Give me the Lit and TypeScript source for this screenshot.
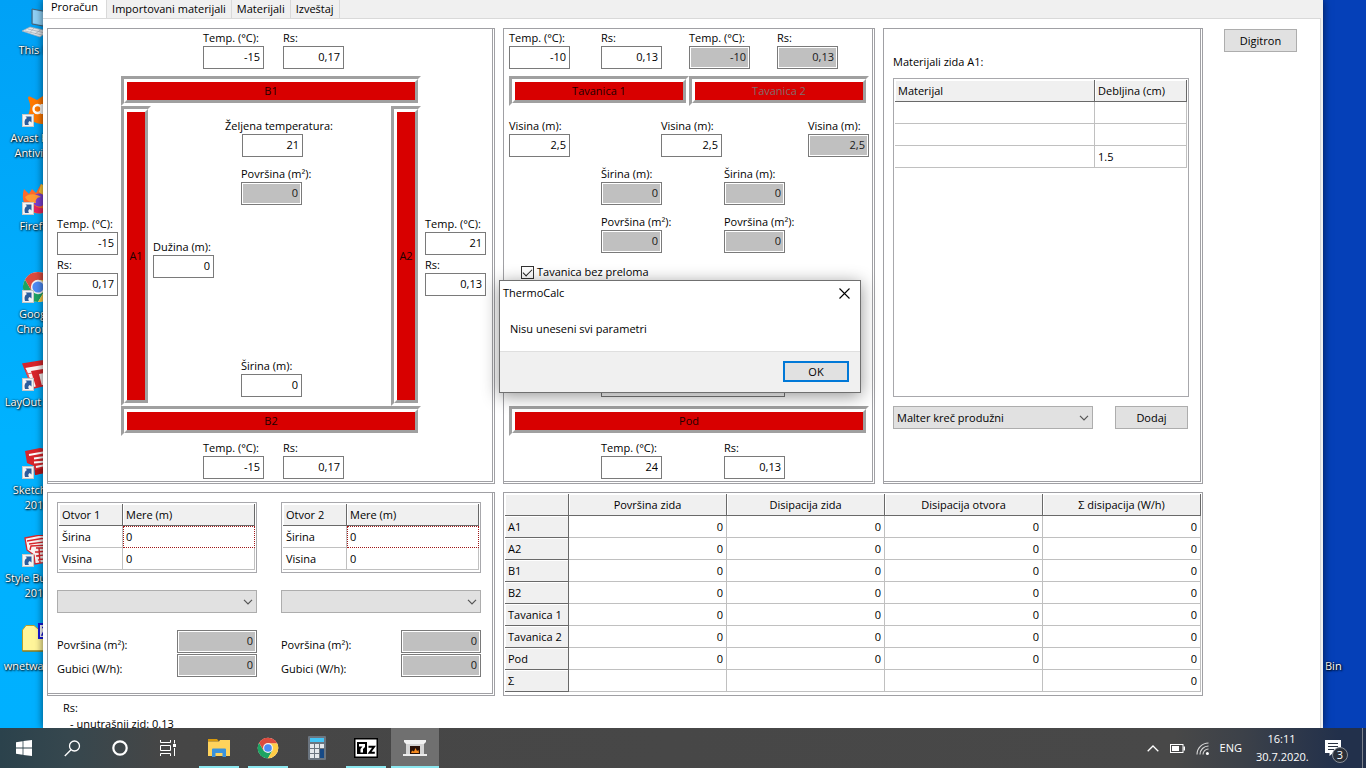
import { LitElement, html, css, svg, nothing } from "lit";
import { customElement, state } from "lit/decorators.js";
import { classMap } from "lit/directives/class-map.js";

const shortcutArrow = svg`
  <rect x="0.5" y="19.5" width="11" height="12" fill="#f4f4f4" stroke="#c8c8c8"/>
  <path d="M3 30 C2 26 3 24 5 23 L3.5 21.5 H9.5 V27.5 L7.8 26 C6 27 6 28.5 7 30 Z" fill="#2c5c9c"/>`;

const chromeShape = svg`
  <circle cx="16" cy="16" r="15" fill="#fff"/>
  <path d="M3 8.5 A15 15 0 0 0 16 31 L22.5 19.8 L9.5 19.8 Z" fill="#1da462"/>
  <path d="M16 31 A15 15 0 0 0 29.2 9 L16 9 L22.5 19.8 Z" fill="#ffcd46"/>
  <path d="M16 9 L29.2 9 A15 15 0 0 0 3 8.5 L9.5 19.8 Z" fill="#dd4b3e"/>
  <circle cx="16" cy="16" r="7.2" fill="#f4f4f4"/>
  <circle cx="16" cy="16" r="5.6" fill="#4c8bf5"/>`;

const layoutTile = svg`
  <path d="M1 5 L32 0 L32 24 L11 29 Z" fill="#fbf4f4" stroke="#d8252b" stroke-width="1.5"/>
  <path d="M1 5 L32 0 L32 4 L3 9 Z" fill="#d8252b"/>
  <path d="M9 12 L32 8 V12 L17 15 L20 27 L14 28 Z" fill="#d8252b"/>
  <path d="M4 11 L10 28 M5 15 L10 14 M7 20 L12 19" fill="none" stroke="#e0575b" stroke-width="1.2"/>`;

const sketchTile = svg`
  <path d="M3 4 L18 1 L32 3 L31 24 L13 28 L12 19 L5 16 Z" fill="#d8252b"/>
  <path d="M7 8 L21 5.5 L32 7 M12 11.5 L22 10 L32 11.5 M14 20 L24 18 L24 14.5 L12 15.5" fill="none" stroke="#fff" stroke-width="2"/>
  <path d="M13 28 L31 24 L31 19 L13 23 Z" fill="#b3151b"/>`;

const builderTile = svg`
  <path d="M3 3 L18 0 L32 2 L31 26 L13 29 L12 20 L5 15 Z" fill="#fbf4f4" stroke="#d8252b" stroke-width="1.3"/>
  <path d="M5 6 L20 3.5 L32 5 M7 9 L22 7 L32 8.5 M8 15 L9 11 L27 10 M14 13 L30 13 M13 17 L27 16 L27 20 M14 21 L30 19 M16 25 L30 22 M17 13 L18 28 M23 4 L23 9"
    fill="none" stroke="#d8252b" stroke-width="1.4"/>`;

const desktopIcons = [
  { label: "This PC", art: svg`
      <path d="M10 2 L32 6 L32 21 L10 17 Z" fill="#5db2e8" stroke="#50606c"/>
      <path d="M11 3 L31 7 L20 18 L11 16 Z" fill="#8fd0f5"/>
      <path d="M0 24 L8 20 L26 24 L18 30 Z" fill="#e2e6ea" stroke="#a3abb3" stroke-width="0.7"/>
      <path d="M3 24 L20 28 M6 22 L23 26 M8 25.5 L12 21 M13 27 L19 22.5" stroke="#a3abb3" stroke-width="0.7"/>` },
  { label: "Avast Free Antivirus", art: svg`
      <path d="M6 3 C6 1.5 7 1 8.5 1.8 L15 5 L21 1 C26 0 31 6 31 14 C32 24 27 30 20 29 C14 29 6 24 4 22 C7 20 7 17 8 14 C9 10 7 6 6 3 Z" fill="#ff7800"/>
      <circle cx="15.5" cy="14" r="4" fill="none" stroke="#fff" stroke-width="2.4"/>
      <path d="M19.8 9 V19" stroke="#fff" stroke-width="2.4"/>${shortcutArrow}` },
  { label: "Firefox", art: svg`
      <path d="M2 6 L7 11 L10 6 L14 10 L19 1 C28 6 32 13 30 21 C27 31 14 34 6 26 C0 20 0 12 2 6 Z" fill="#ff6a2b"/>
      <path d="M19 1 C28 6 32 13 30 20 C27 14 21 13 17 9 Z" fill="#ffcb37"/>
      <path d="M8 26 C14 33 27 31 30 21 C25 26 18 27 12 22 Z" fill="#e6245e"/>
      <circle cx="17" cy="17" r="6.5" fill="#7a3fd0"/>
      <path d="M3 14 C8 10 14 11 19 14 C15 14 13 17 14 20 C9 20 5 18 3 14 Z" fill="#ff9a33"/>${shortcutArrow}` },
  { label: "Google Chrome", art: svg`${chromeShape}${shortcutArrow}` },
  { label: "LayOut 2016", art: svg`${layoutTile}${shortcutArrow}` },
  { label: "SketchUp 2016", art: svg`${sketchTile}${shortcutArrow}` },
  { label: "Style Builder 2016", art: svg`${builderTile}${shortcutArrow}` },
  { label: "wnetwatcher", art: svg`
      <path d="M0.5 7 L4 2.5 L12 2.5 L16 6 L31 6 L31 28 L0.5 28 Z" fill="#fff59a" stroke="#b79f2c"/>
      <path d="M0.5 28 L31 28" stroke="#7c6a10"/>
      <rect x="17" y="1" width="14" height="14" fill="#fff" stroke="#1818e0" stroke-width="2"/>
      <path d="M20 4.5 H28 M24 4.5 L20 12 H28" stroke="#1818e0" stroke-width="1.5" fill="none"/>` },
];

const rows = ["A1", "A2", "B1", "B2", "Tavanica 1", "Tavanica 2", "Pod"];
const metrics = ["Površina zida", "Disipacija zida", "Disipacija otvora", "Σ disipacija (W/h)"];
const tabs = ["Proračun", "Importovani materijali", "Materijali", "Izveštaj"];

@customElement("app-root")
export class AppRoot extends LitElement {
  @state() private tab = 0;
  @state() private dialogOpen = true;

  static styles = css`
    :host {
      display: block;
      height: 100vh;
      font: 11px/16px "Open Sans", "Noto Sans", sans-serif;
      color: #000;
    }
    *, *::before { box-sizing: border-box; }
    button, input, select { font: inherit; color: inherit; margin: 0; border-radius: 0; }
    svg { display: block; }

    .screen {
      position: relative;
      height: 100%;
      display: grid;
      grid-template-rows: minmax(0, 1fr) 40px;
      background: linear-gradient(90deg, #00aafb 0 4%, #0540b8 96%);
      overflow: hidden;
    }
    .desktop { display: flex; min-height: 0; }
    .shortcuts, .edge { width: 43px; overflow: hidden; color: #fff; text-shadow: 1px 1px 2px #000, 0 0 2px #000; }
    .shortcuts { padding-top: 7px; background: linear-gradient(#00a1f6, #00b2ff 60%, #00b0ff); }
    .shortcut {
      width: 74px;
      height: 88px;
      display: flex;
      flex-direction: column;
      align-items: center;
      gap: 3px;
      line-height: 15px;
      text-align: center;
    }
    .shortcut svg { margin-left: 2px; }
    .edge { display: flex; flex-direction: column; justify-content: flex-end; padding: 0 2px 54px; }

    .window {
      flex: 1;
      min-width: 0;
      overflow: hidden;
      display: flex;
      flex-direction: column;
      background: #f0f0f0;
      padding-right: 2px;
    }
    .window-frame { display: flex; flex: 1; min-width: 0; position: relative; box-shadow: 0 0 8px rgba(0, 0, 0, 0.6); }
    .tabs { display: flex; height: 18px; flex: none; }
    .tabs button {
      height: 19px;
      padding: 0 5px 1px;
      border: 0;
      border-right: 1px solid #d9d9d9;
      border-bottom: 1px solid #d9d9d9;
      background: #f0f0f0;
      line-height: 18px;
      white-space: nowrap;
    }
    .tabs button.active { background: #fff; border-bottom-color: #fff; padding: 0 8px 4px; line-height: 14px; }
    .page {
      flex: 1;
      min-height: 0;
      background: #fff;
      border-top: 1px solid #d9d9d9;
      border-right: 1px solid #d9d9d9;
      padding: 9px 23px 0 4px;
      overflow: hidden;
    }
    .layout { display: flex; gap: 21px; align-items: flex-start; }
    .panels {
      flex: 1;
      min-width: 0;
      display: grid;
      grid-template-columns: 448fr 372fr 320fr;
      gap: 8px;
    }
    .panel {
      border: 1px solid #a0a0a4;
      box-shadow: inset -1px -1px 0 #fff, inset -2px -2px 0 #a0a0a4;
      min-width: 0;
    }
    .notes { padding: 4px 16px 0; }
    .notes div { padding-left: 7px; }

    .btn { height: 23px; border: 1px solid #adadad; background: #e1e1e1; padding: 0; text-align: center; }
    .btn.std { width: 73px; flex: none; }
    .digitron { margin-top: 1px; }

    .field { display: flex; flex-direction: column; width: 61px; }
    .field label { white-space: nowrap; height: 16px; }
    .num {
      width: 100%;
      height: 23px;
      border: 1px solid #7a7a7a;
      background: #fff;
      padding: 0 3px 2px;
      text-align: right;
      outline: none;
    }
    .num:disabled { background: #c0c0c0; box-shadow: inset 0 0 0 1px #fff; color: #1a1a1a; opacity: 1; }

    .wall {
      display: flex;
      border: 3px solid;
      border-color: #a0a0a0 #fff #fff #a0a0a0;
      background: #d80000;
      padding: 0;
      height: 30px;
      color: #1c0000;
    }
    .wall span {
      flex: 1;
      align-self: stretch;
      display: flex;
      align-items: center;
      justify-content: center;
      border: 3px solid;
      border-color: #fff #a0a0a0 #a0a0a0 #fff;
      white-space: nowrap;
    }
    .wall.tall { width: 30px; height: 300px; }
    .wall:disabled { color: #836c6c; }

    .plan { display: flex; flex-direction: column; align-items: center; padding: 1px 0 4px; }
    .pair { width: 300px; display: flex; gap: 19px; padding-left: 82px; }
    .pair.top { margin-bottom: 7px; }
    .pair.bottom { margin-top: 4px; }
    .plan > .wall { width: 300px; }
    .middle { display: grid; grid-template-columns: 73px 30px 240px 30px 73px; justify-content: center; }
    .side { display: flex; flex-direction: column; justify-content: center; gap: 2px; padding-left: 9px; }
    .side.right { padding-left: 4px; }
    .room { display: flex; flex-direction: column; padding: 12px 0 9px 74px; }
    .room .area { margin: 9px 0 0 16px; }
    .room .wish .num { margin-left: 17px; }
    .room .len { margin: 34px 0 0 -72px; }
    .room .wid { margin: auto 0 0 16px; }

    .section { width: 360px; margin: 0 auto; padding: 1px 0 4px; display: flex; flex-direction: column; }
    .four { display: grid; grid-template-columns: 92px 88px 88px 61px; margin-bottom: 7px; }
    .roofs { display: grid; grid-template-columns: 1fr 1fr; }
    .three { display: grid; grid-template-columns: 152px 147px 61px; margin: 12px 0 9px; }
    .two { display: grid; grid-template-columns: 123px 61px; padding-left: 92px; row-gap: 9px; }
    .check { display: flex; align-items: center; gap: 3px; padding: 11px 0 0 12px; }
    .check input {
      appearance: none;
      width: 13px;
      height: 13px;
      border: 1px solid #333;
      background: #fff;
      display: grid;
      place-items: center;
    }
    .check input:checked::before {
      content: "";
      width: 9px;
      height: 5px;
      border-left: 1px solid #222;
      border-bottom: 1px solid #222;
      transform: translateY(-1px) rotate(-45deg);
    }
    .span { width: 184px; margin: 78px 0 9px 92px; }
    .section .two.bottom { margin-top: 4px; }

    .materials { padding: 25px 13px 0 9px; display: flex; flex-direction: column; }
    .grid-box { border: 1px solid #a8a8ac; padding: 1px; background: #fff; }
    .materials .grid-box { height: 319px; margin: 8px 0 9px; }
    .add { display: flex; justify-content: space-between; padding-right: 1px; }
    .combo { display: grid; align-items: center; }
    .combo.material { width: 200px; }
    .combo select, .combo svg { grid-area: 1 / 1; }
    .combo svg { justify-self: end; margin-right: 4px; pointer-events: none; }
    .combo select {
      appearance: none;
      width: 100%;
      height: 23px;
      border: 1px solid #adadad;
      background: #e1e1e1;
      padding: 0 20px 0 3px;
      outline: none;
    }

    table { border-collapse: separate; border-spacing: 0; table-layout: fixed; width: 100%; }
    th, td {
      height: 22px;
      padding: 0 3px;
      border-right: 1px solid #c0c0c0;
      border-bottom: 1px solid #c0c0c0;
      font-weight: normal;
      text-align: left;
      line-height: 16px;
      white-space: nowrap;
    }
    th {
      background: #f0f0f0;
      border-color: #696969;
      box-shadow: inset 1px 1px 0 #fff;
    }
    .col-thick { width: 92px; }
    .col-name { width: 64px; }
    .openings tbody th { background: #fff; border-color: #c0c0c0; }
    td.current { outline: 1px dotted #a01818; outline-offset: -1px; border-color: #fff; }
    .results { grid-column: 2 / 4; border: 1px solid #a0a0a4; padding: 1px 1px 3px; }
    .results thead th { text-align: center; }
    .results td { text-align: right; }

    .openings { display: grid; grid-template-columns: 200px 200px; justify-content: space-between; padding: 9px 13px 0 9px; }
    .opening { display: flex; flex-direction: column; }
    .opening .grid-box { padding: 1px 1px 2px; }
    .opening .combo { margin: 17px 0; }
    .loss { display: flex; justify-content: space-between; align-items: flex-end; margin-bottom: 1px; }
    .loss .num { width: 80px; }

    .dialog {
      position: absolute;
      left: 499px;
      top: 280px;
      width: 362px;
      border: 1px solid #707070;
      background: #fff;
      box-shadow: 0 3px 16px rgba(0, 0, 0, 0.42);
    }
    .dialog header { display: flex; justify-content: space-between; height: 28px; padding: 4px 10px 0 3px; }
    .close { border: 0; background: none; padding: 0; width: 11px; height: 16px; display: grid; place-items: center; }
    .dialog p { margin: 0; padding: 12px 10px 14px; }
    .dialog footer {
      display: flex;
      justify-content: flex-end;
      padding: 9px 11px 10px;
      background: #f0f0f0;
      border-top: 1px solid #dfdfdf;
    }
    .ok { width: 66px; height: 21px; border: 2px solid #0078d7; background: #e1e1e1; padding: 0; line-height: 16px; }

    .taskbar {
      position: relative;
      display: flex;
      justify-content: space-between;
      background: linear-gradient(90deg, #2b424c 0, #36474e 5%, #464646 12%, #484848 86%, #3c4149 91%, #22304b 98%);
      color: #fff;
    }
    .apps, .tray { display: flex; }
    .apps button {
      width: 48px;
      border: 0;
      background: none;
      padding: 0;
      display: grid;
      place-items: center;
    }
    .apps button.app { width: 40px; margin: 0 5px 0 4px; }
    .apps button.open { box-shadow: inset 0 -2px 0 #8ce8f0; }
    .apps button.front { width: 48px; margin: 0; background: #707070; }
    .apps button.first { margin-left: 7px; }
    .tray { align-items: center; }
    .tray > svg { margin-right: 11px; }
    .clock { width: 51px; margin: 0 18px 0 14px; text-align: center; line-height: 18px; white-space: nowrap; }
    .alerts { display: grid; width: 24px; height: 100%; margin-right: 13px; border: 0; padding: 0; background: none; position: relative; color: #fff; }
    .alerts svg { margin: 12px 0 0; }
    .badge {
      position: absolute;
      left: 7px;
      top: 19px;
      width: 16px;
      height: 16px;
      border-radius: 50%;
      border: 1px solid #8a8f98;
      background: #2a2f38;
      line-height: 14px;
      text-align: center;
    }
    .peek { height: 100%; border-left: 1px solid #7d828c; width: 4px; }
  `;

  private field(id: string, label: string, value: string, opts: { off?: boolean; cls?: string } = {}) {
    return html`<div class="field ${opts.cls ?? ""}">
      <label for=${id}>${label}</label>
      <input class="num" id=${id} type="text" .value=${value} ?disabled=${opts.off ?? false}>
    </div>`;
  }

  private wall(name: string, tall = false, off = false) {
    return html`<button class=${classMap({ wall: true, tall })} ?disabled=${off}><span>${name}</span></button>`;
  }

  private combo(name: string, value: string, cls = "") {
    return html`<div class="combo ${cls}">
      <select aria-label=${name}><option>${value}</option></select>
      <svg width="10" height="6" viewBox="0 0 10 6"><path d="M1 0.8 L5 4.8 L9 0.8" fill="none" stroke="#555" stroke-width="1.2"/></svg>
    </div>`;
  }

  private opening(n: number) {
    return html`<div class="opening">
      <div class="grid-box">
        <table>
          <colgroup><col class="col-name"><col></colgroup>
          <thead><tr><th>Otvor ${n}</th><th>Mere (m)</th></tr></thead>
          <tbody>
            <tr><th>Širina</th><td class="current">0</td></tr>
            <tr><th>Visina</th><td>0</td></tr>
          </tbody>
        </table>
      </div>
      ${this.combo(`Otvor ${n}`, "")}
      <div class="loss"><label for="oa${n}">Površina (m²):</label><input class="num" id="oa${n}" .value=${"0"} disabled></div>
      <div class="loss"><label for="ol${n}">Gubici (W/h):</label><input class="num" id="ol${n}" .value=${"0"} disabled></div>
    </div>`;
  }

  private plan() {
    return html`<section class="panel plan">
      <div class="pair top">${this.field("b1t", "Temp. (°C):", "-15")}${this.field("b1r", "Rs:", "0,17")}</div>
      ${this.wall("B1")}
      <div class="middle">
        <div class="side">${this.field("a1t", "Temp. (°C):", "-15")}${this.field("a1r", "Rs:", "0,17")}</div>
        ${this.wall("A1", true)}
        <div class="room">
          ${this.field("wish", "Željena temperatura:", "21", { cls: "wish" })}
          ${this.field("area", "Površina (m²):", "0", { off: true, cls: "area" })}
          ${this.field("len", "Dužina (m):", "0", { cls: "len" })}
          ${this.field("wid", "Širina (m):", "0", { cls: "wid" })}
        </div>
        ${this.wall("A2", true)}
        <div class="side right">${this.field("a2t", "Temp. (°C):", "21")}${this.field("a2r", "Rs:", "0,13")}</div>
      </div>
      ${this.wall("B2")}
      <div class="pair bottom">${this.field("b2t", "Temp. (°C):", "-15")}${this.field("b2r", "Rs:", "0,17")}</div>
    </section>`;
  }

  private section() {
    return html`<section class="panel"><div class="section">
      <div class="four">
        ${this.field("t1t", "Temp. (°C):", "-10")}${this.field("t1r", "Rs:", "0,13")}
        ${this.field("t2t", "Temp. (°C):", "-10", { off: true })}${this.field("t2r", "Rs:", "0,13", { off: true })}
      </div>
      <div class="roofs">${this.wall("Tavanica 1")}${this.wall("Tavanica 2", false, true)}</div>
      <div class="three">
        ${this.field("h1", "Visina (m):", "2,5")}${this.field("h2", "Visina (m):", "2,5")}
        ${this.field("h3", "Visina (m):", "2,5", { off: true })}
      </div>
      <div class="two">
        ${this.field("w1", "Širina (m):", "0", { off: true })}${this.field("w2", "Širina (m):", "0", { off: true })}
        ${this.field("p1", "Površina (m²):", "0", { off: true })}${this.field("p2", "Površina (m²):", "0", { off: true })}
      </div>
      <div class="check"><input type="checkbox" id="flat" checked><label for="flat">Tavanica bez preloma</label></div>
      ${this.field("span", "Dužina (m):", "0", { cls: "span" })}
      ${this.wall("Pod")}
      <div class="two bottom">${this.field("pt", "Temp. (°C):", "24")}${this.field("pr", "Rs:", "0,13")}</div>
    </div></section>`;
  }

  private materials() {
    return html`<section class="panel materials">
      <div>Materijali zida A1:</div>
      <div class="grid-box">
        <table>
          <colgroup><col><col class="col-thick"></colgroup>
          <thead><tr><th>Materijal</th><th>Debljina (cm)</th></tr></thead>
          <tbody>${["", "", "1.5"].map((v) => html`<tr><td></td><td>${v}</td></tr>`)}</tbody>
        </table>
      </div>
      <div class="add">${this.combo("Materijal", "Malter kreč produžni", "material")}<button class="btn std">Dodaj</button></div>
    </section>`;
  }

  private results() {
    return html`<section class="results"><table>
      <colgroup><col class="col-name"><col><col><col><col></colgroup>
      <thead><tr><th></th>${metrics.map((m) => html`<th>${m}</th>`)}</tr></thead>
      <tbody>
        ${rows.map((r) => html`<tr><th>${r}</th>${metrics.map(() => html`<td>0</td>`)}</tr>`)}
        <tr><th>Σ</th><td></td><td></td><td></td><td>0</td></tr>
      </tbody>
    </table></section>`;
  }

  private taskbar() {
    return html`<nav class="taskbar">
      <div class="apps">
        <button aria-label="Start"><svg width="16" height="16" viewBox="0 0 16 16" fill="#fff"><path d="M0 2.2 L6.6 1.2 V7.6 H0 Z M7.4 1.1 L16 0 V7.6 H7.4 Z M0 8.4 H6.6 V14.8 L0 13.8 Z M7.4 8.4 H16 V16 L7.4 14.9 Z"/></svg></button>
        <button aria-label="Search"><svg width="17" height="17" viewBox="0 0 17 17" fill="none" stroke="#fff" stroke-width="1.3"><circle cx="10.5" cy="6" r="5"/><path d="M7 9.8 L0.8 16"/></svg></button>
        <button aria-label="Cortana"><svg width="16" height="16" viewBox="0 0 16 16"><circle cx="8" cy="8" r="6.7" fill="none" stroke="#fff" stroke-width="2.2"/></svg></button>
        <button aria-label="Task view"><svg width="16" height="16" viewBox="0 0 16 16" fill="none" stroke="#fff"><path d="M0.5 0 V2.5 H10.5 V0 M0.5 16 V13.5 H10.5 V16 M0.5 5.5 H10.5 V10.5 H0.5 Z M14.5 0 V3.5 M14.5 8 V16"/><rect x="13" y="4" width="3" height="3" fill="#fff" stroke="none"/></svg></button>
        <button class="app open first" aria-label="Files"><svg width="22" height="18" viewBox="0 0 22 18"><path d="M0 0 H9 L11 2.5 H0 Z" fill="#d99a0c"/><path d="M0 2.5 H11 L12 1 H22 V17 H0 Z" fill="#ffd35c"/><path d="M4 18 V10.5 Q4 9.5 5 9.5 H17 Q18 9.5 18 10.5 V18 H14.5 V14 H7.5 V18 Z" fill="#3a92dc"/></svg></button>
        <button class="app open" aria-label="Chrome"><svg width="22" height="22" viewBox="0 0 32 32">${chromeShape}</svg></button>
        <button class="app" aria-label="Calculator"><svg width="18" height="24" viewBox="0 0 18 24"><rect width="18" height="24" rx="1" fill="#6b7580"/><rect x="2" y="2" width="14" height="4" fill="#43c4f5"/><path d="M2 8h4v4H2zM7 8h4v4H7zM12 8h4v4h-4zM2 13h4v4H2zM7 13h4v4H7zM2 18h4v4H2zM7 18h4v4H7z" fill="#e4e8ec"/><rect x="12" y="13" width="4" height="9" fill="#174a86"/></svg></button>
        <button class="app open" aria-label="7-Zip"><svg width="24" height="20" viewBox="0 0 24 20"><rect width="24" height="20" fill="#000"/><rect x="1.5" y="1.5" width="21" height="17" fill="#fff"/><rect x="3" y="4" width="10" height="12" fill="#000"/><path d="M5 6 H11 V9 L9 11 V14.5 H6.5 V11 L8.5 8.5 H5 Z" fill="#fff"/><path d="M14.5 8.8 H20 L15.5 14.8 H20.8" fill="none" stroke="#000" stroke-width="2"/></svg></button>
        <button class="app open front" aria-label="ThermoCalc"><svg width="24" height="16" viewBox="0 0 24 16"><path d="M1 0 H23 V2 L21 4 H3 L1 2 Z" fill="#f2f2f2"/><rect x="3" y="4" width="18" height="10" fill="#d4d4d4"/><rect x="7" y="6" width="10" height="8" fill="#2a1208"/><path d="M8 13 L9 10.5 L11 11.5 L12.5 8 L14 11 L15.5 10 L16 13 Z" fill="#f58a1f"/><rect x="0" y="14" width="24" height="2" fill="#ececec"/></svg></button>
      </div>
      <div class="tray">
        <svg width="12" height="7" viewBox="0 0 12 7"><path d="M0.7 6.3 L6 1 L11.3 6.3" fill="none" stroke="#fff" stroke-width="1.3"/></svg>
        <svg width="15" height="9" viewBox="0 0 15 9"><rect x="0.5" y="0.5" width="12.5" height="8" fill="none" stroke="#fff"/><rect x="2" y="2" width="7" height="5" fill="#fff"/><rect x="13.5" y="2.5" width="1.5" height="4" fill="#fff"/></svg>
        <svg width="13" height="13" viewBox="0 0 13 13" fill="none" stroke="#d8d8d8" stroke-width="1.1"><path d="M1 12.5 A11.5 11.5 0 0 1 12.5 1"/><path d="M4 12.5 A8.5 8.5 0 0 1 12.5 4"/><path d="M7 12.5 A5.5 5.5 0 0 1 12.5 7"/><circle cx="11.4" cy="11.4" r="1.5" fill="#fff" stroke="none"/></svg>
        <span>ENG</span>
        <div class="clock">16:11<br>30.7.2020.</div>
        <button class="alerts" aria-label="Notifications">
          <svg width="16" height="16" viewBox="0 0 16 16"><path d="M0 0 H16 V13 H8 L4.5 16 V13 H0 Z" fill="#fff"/><path d="M3 3.5 H13 M3 6.5 H13 M3 9.5 H9" stroke="#2a3240"/></svg>
          <span class="badge">3</span>
        </button>
        <span class="peek"></span>
      </div>
    </nav>`;
  }

  render() {
    return html`<div class="screen">
      <div class="desktop">
        <div class="shortcuts">
          ${desktopIcons.map((i) => html`<div class="shortcut"><svg width="32" height="32" viewBox="0 0 32 32">${i.art}</svg><span>${i.label}</span></div>`)}
        </div>
        <div class="window-frame"><main class="window">
          <div class="tabs" role="tablist">
            ${tabs.map((t, i) => html`<button role="tab" class=${classMap({ active: this.tab === i })} @click=${() => (this.tab = i)}>${t}</button>`)}
          </div>
          <div class="page">
            <div class="layout">
              <div class="panels">
                ${this.plan()}${this.section()}${this.materials()}
                <section class="panel openings">${this.opening(1)}${this.opening(2)}</section>
                ${this.results()}
              </div>
              <button class="btn std digitron">Digitron</button>
            </div>
            <div class="notes">Rs:<div>- unutrašnji zid: 0.13</div></div>
          </div>
        </main></div>
        <div class="edge">Bin</div>
      </div>
      ${this.taskbar()}
      ${this.dialogOpen
        ? html`<div class="dialog" role="dialog" aria-labelledby="dlg">
            <header><span id="dlg">ThermoCalc</span>
              <button class="close" aria-label="Close" @click=${() => (this.dialogOpen = false)}>
                <svg width="11" height="11" viewBox="0 0 11 11"><path d="M0.5 0.5 L10.5 10.5 M10.5 0.5 L0.5 10.5" stroke="#000" stroke-width="1.1"/></svg>
              </button></header>
            <p>Nisu uneseni svi parametri</p>
            <footer><button class="ok" @click=${() => (this.dialogOpen = false)}>OK</button></footer>
          </div>`
        : nothing}
    </div>`;
  }
}
